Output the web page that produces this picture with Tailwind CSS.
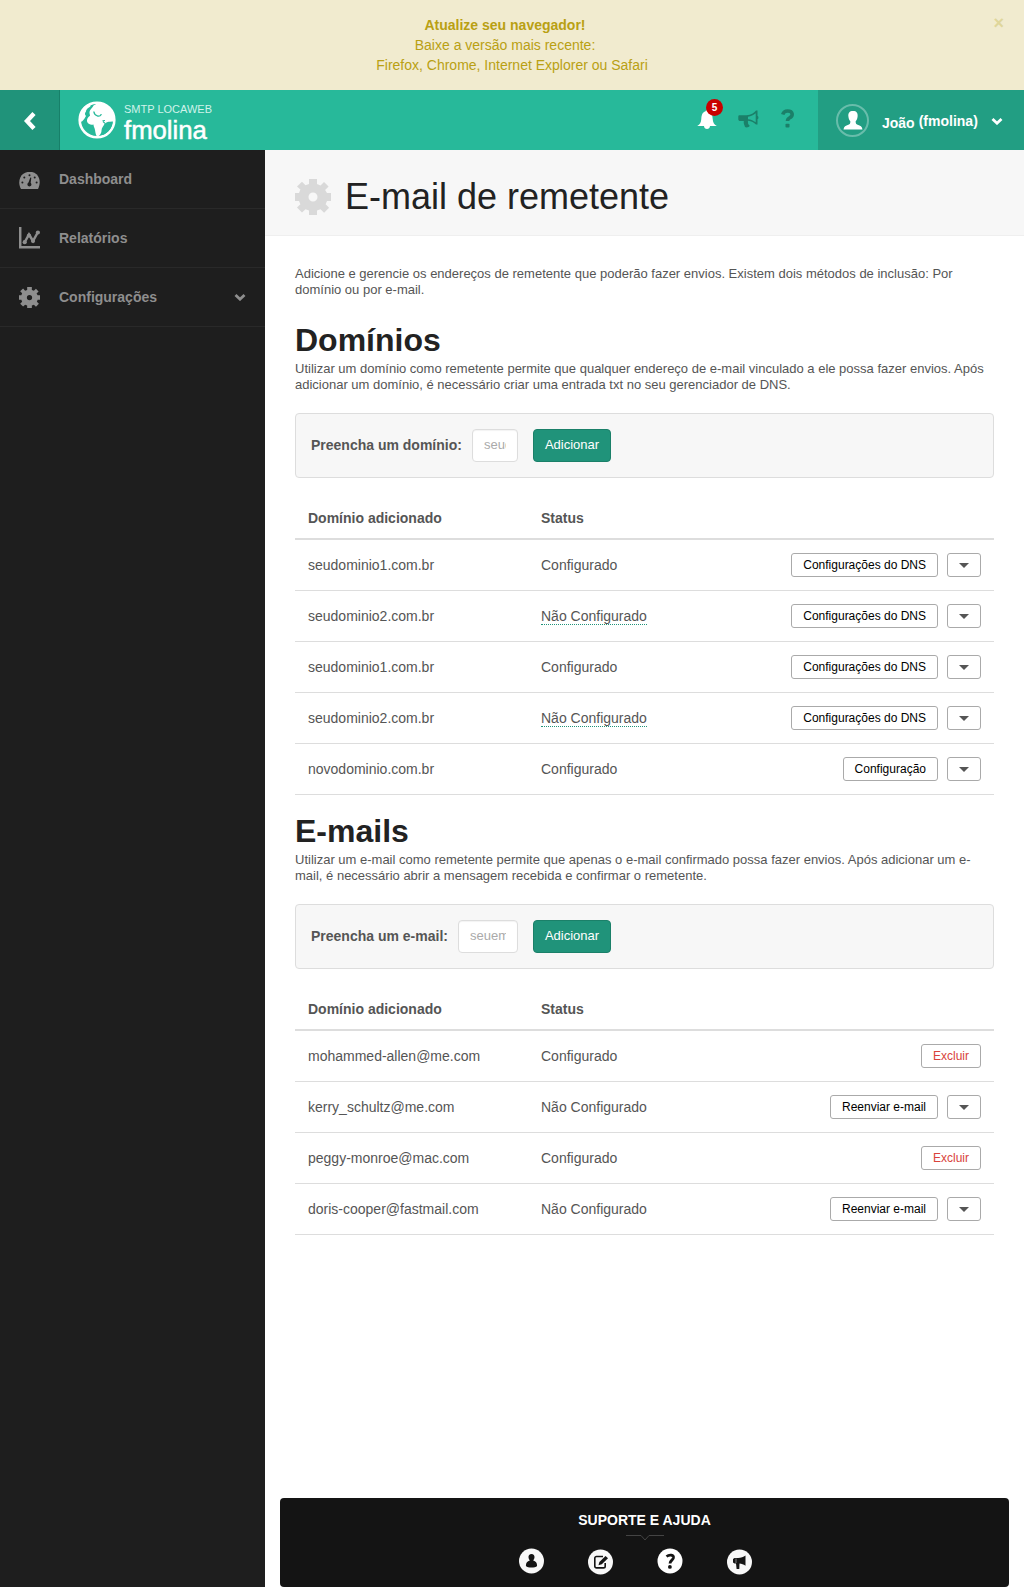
<!DOCTYPE html>
<html lang="pt-BR">
<head>
<meta charset="utf-8">
<title>E-mail de remetente</title>
<script src="https://cdn.jsdelivr.net/npm/@tailwindcss/browser@4"></script>
</head>
<body class="flex h-[1587px] w-[1024px] flex-col overflow-hidden bg-white font-['Liberation_Sans',Arial,sans-serif] text-sm text-[#555] antialiased">
<svg class="hidden">
  <symbol id="gear" viewBox="0 0 36 36"><path fill-rule="evenodd" d="M14 0h8v5l3.500 1.500 3.500-3.600 4.600 4.700-3.500 3.500L32 14h4v8h-4l-1.400 3.200 3.500 3.500-5 5-3.600-3.400L22 31.500V36h-8v-4.500l-3.500-1.200-3.500 3.300-5-5 3.400-3.400L4 22H0v-8h4l1.400-3.500L2 7.400l5-4.700 3.500 3.600L14 5zM18 13.500a4.500 4.500 0 1 0 0 9 4.500 4.500 0 0 0 0-9z"/></symbol>
  <symbol id="horn" viewBox="0 0 21 20"><path fill-rule="evenodd" d="M1.500 6.200h7C13 6 16 4 18 1.500h1.500v5.200c1.300.3 1.300 3.300 0 3.600v5.200H18c-2-2-4.500-3.300-7.800-3.800-.8 1 .2 1.800-.2 2.800.5.800.8 1.500 1.800 2.200-1 2-3.800 2-4.800 1.200-.5-2-1.700-3.500-1.200-6H1.500C.6 11.500.3 11 .3 10.300v-3C.3 6.700.8 6.200 1.500 6.200zM17.700 4.200c-2.200 2-4.700 3.100-7.700 3.500v2.500c3 .3 5.500 1.400 7.700 3.100z"/></symbol>
  <symbol id="chev" viewBox="0 0 12 8"><path d="M1.500 2L6 6.200 10.500 2" fill="none" stroke="currentColor" stroke-width="2.800"/></symbol>
</svg>

<div class="relative h-[90px] bg-[#f1ebcf] pt-[15px] text-center leading-5 text-[#b9a013]">
  <p class="pr-[14px] font-bold">Atualize seu navegador!</p>
  <p class="pr-[14px]">Baixe a versão mais recente:</p>
  <p>Firefox, Chrome, Internet Explorer ou Safari</p>
  <span class="absolute top-[9px] right-5 text-lg font-bold text-[#dfd69b]">×</span>
</div>

<header class="flex h-[60px] bg-[#27b99a] text-white">
  <a class="flex w-[60px] items-center justify-center border-r border-[#178069] bg-[#20937a]">
    <svg class="mt-[2px] h-5 w-3.5" viewBox="0 0 14 20"><path d="M11 2.500L4 10l7 7.500" fill="none" stroke="#fff" stroke-width="4.400"/></svg>
  </a>
  <div class="flex flex-1 pl-[18px]">
    <svg class="mt-[11px] h-[38px] w-[38px]" viewBox="0 0 38 38"><circle cx="19" cy="19" r="17.300" fill="none" stroke="#fff" stroke-width="2.600"/><path fill="#fff" d="M1.500 14.500C3 8 7 4 12 2.500c-.5 1.500 1.500 2 0 3.300-2 1-4 2.700-4.200 5.200-1.300.8-1 3 .2 4-1 1.500-2 3.700-4 5.500l-3 .5z"/><path fill="#fff" d="M20 2c7 0 13 4 15.500 11l1 7-3 .8c-2.500-.3-5.500.2-7 2-.5 2-3 4-3 6.700 0 2.500-1.500 5.500-4.300 6-1.500-1-1.700-4-2.200-6.500-.3-2-1.500-3.500-1.500-5.500-2.500.8-5-.2-6.300-2.500-.8-2.500.5-5 2.800-6.300C12 13 10.800 11.500 12 9.500c.8-2 3-3 3.500-5z"/><path d="M15.800 10.500c.3 2.500 1.600 3.800 3.700 4.500 2.200.5 3.500-.5 3.700-2" fill="none" stroke="#27b99a" stroke-width="1.300"/><path d="M25 20.500l2 1.800M24.500 19.700l2.500-.2" stroke="#27b99a" stroke-width="1.100"/><path fill="#27b99a" d="M33 20.500l1.500 1c-.8 5.500-4 9.800-8.800 12.200l-2.200.2c1.800-1.400 2-4 2.200-5.900 2.500-1.700 5.200-3.500 7.300-7.500z"/></svg>
    <div class="ml-2 pt-[13px]">
      <div class="text-[11px] leading-3 text-[#d0f3ea]">SMTP LOCAWEB</div>
      <div class="pt-px text-[25.700px] leading-[28px] [-webkit-text-stroke:0.5px_#fff]">fmolina</div>
    </div>
  </div>
  <div class="flex w-[121px] items-start text-[#1b8069]">
    <div class="relative">
      <svg class="mt-5 h-[20px] w-[20px]" viewBox="0 0 20 20"><path fill="#fff" d="M8.600 1.200C8.600-.2 11.400-.2 11.400 1.200 15 2.500 15.500 5.500 15.700 9c.2 3.500 1.300 5.500 4.100 7H13c0 4-6 4-6 0H.2C3 14.500 4.100 12.500 4.300 9c.2-3.500.7-6.500 4.300-7.800z"/></svg>
      <span class="absolute -right-[6px] top-[9px] flex h-[17px] w-[17px] items-center justify-center rounded-full bg-[#c90000] pt-px text-[10px] font-bold text-white">5</span>
    </div>
    <svg class="ml-[21px] mt-[19px] h-5 w-[21px] fill-current"><use href="#horn"/></svg>
    <svg class="ml-[22px] mt-[19px] h-[19px] w-[13px]" viewBox="0 0 13 19"><path d="M1.700 5.500C2.500 3 4 2 6.500 2c6 0 5.500 5.200 2.300 6.700-1.800 1-2.300 1.800-2.300 3.300" fill="none" stroke="currentColor" stroke-width="3.600"/><rect x="4.500" y="14.800" width="4" height="3.800" rx=".8" fill="currentColor"/></svg>
  </div>
  <div class="flex w-[206px] bg-[#229e83] pl-[18px]">
    <div class="mt-[14px] flex h-[33px] w-[33px] items-center justify-center rounded-full border-2 border-[#68bdab]">
      <svg class="h-[19px] w-[20px] shrink-0" viewBox="0 0 20 19"><path fill="#fff" d="M10 0c3.500 0 5 2 4.600 5.500-.3 2.500-1 3.800-2 5 .2 2 .4 2.700 2 3.200 2.800.8 4.400 1.700 4.900 4.800H.5c.5-3.100 2.100-4 4.900-4.800 1.600-.5 1.800-1.200 2-3.200-1-1.200-1.700-2.500-2-5C5 2 6.500 0 10 0z"/></svg>
    </div>
    <div class="ml-[13px] flex pt-[21px] text-[14px] leading-5 font-bold"><span class="mt-[2px] mr-1">João</span><span>(fmolina)</span></div>
    <svg class="mt-[27px] ml-[13px] h-2 w-3"><use href="#chev"/></svg>
  </div>
</header>

<div class="flex min-h-0 flex-1">
  <nav class="w-[265px] bg-[#1e1e1e] font-bold text-[#8e8e8e]">
    <a class="flex h-[59px] items-center border-b border-[#292929] pl-[19px]">
      <svg class="mt-[3px] h-[17px] w-[21px]" viewBox="0 0 21 17"><path fill="currentColor" d="M2 17C-1 12 0 5 4 2 8-1 14-1 17.500 2.200 21.500 6 21.500 12 19 17z"/><g fill="#1e1e1e"><circle cx="3.400" cy="10.500" r="1"/><circle cx="5.300" cy="5.500" r="1"/><circle cx="10.500" cy="3.200" r="1"/><circle cx="15.700" cy="5.500" r="1"/><circle cx="17.600" cy="10.500" r="1"/><path d="M11.300 5.500l1 .3-.6 5c1.500 1.700.5 3.700-1.200 3.700-2 0-3-2.500-1-3.900z"/></g></svg>
      <span class="ml-[19px]">Dashboard</span>
    </a>
    <a class="flex h-[59px] items-center border-b border-[#292929] pl-[19px]">
      <svg class="h-[22px] w-[21px]" viewBox="0 0 21 22"><g fill="none" stroke="currentColor"><path d="M1.200 0v20.300H21" stroke-width="2.500"/><path d="M5.500 15.500l4.500-8 4 6.500 5-9" stroke-width="2.500"/></g><g fill="currentColor"><circle cx="5.700" cy="15.200" r="2.100"/><circle cx="10" cy="8.500" r="2.100"/><circle cx="14" cy="14" r="2.100"/><circle cx="18.900" cy="5.500" r="2.100"/></g></svg>
      <span class="ml-[19px]">Relatórios</span>
    </a>
    <a class="flex h-[59px] items-center border-b border-[#292929] pl-[19px]">
      <svg class="h-[21px] w-[21px] fill-current"><use href="#gear"/></svg>
      <span class="ml-[19px] flex-1">Configurações</span>
      <svg class="mr-[19px] h-2 w-3"><use href="#chev"/></svg>
    </a>
  </nav>

  <main class="flex flex-1 flex-col">
    <div class="flex h-[86px] border-b border-[#efefef] bg-[#f7f7f7] pl-[30px]">
      <svg class="mt-[29px] h-[36px] w-[36px] fill-[#d9d9d9]"><use href="#gear"/></svg>
      <h1 class="ml-[14px] mt-[27px] text-[36px] leading-10 text-[#222]">E-mail de remetente</h1>
    </div>
    <div class="w-[729px] pl-[30px] text-[13px] leading-4">
      <p class="pt-[30px]">Adicione e gerencie os endereços de remetente que poderão fazer envios. Existem dois métodos de inclusão: Por<br>domínio ou por e-mail.</p>

      <section class="mt-[22px]">
        <h2 class="h-[41px] text-[32px] leading-[40px] font-bold text-[#222]">Domínios</h2>
        <p>Utilizar um domínio como remetente permite que qualquer endereço de e-mail vinculado a ele possa fazer envios. Após<br>adicionar um domínio, é necessário criar uma entrada txt no seu gerenciador de DNS.</p>
        <form class="mt-5 flex h-[65px] items-center rounded border border-[#ddd] bg-[#f7f7f7] pl-[15px]">
          <label class="w-[161px] pb-0.5 text-sm font-bold">Preencha um domínio:</label>
          <div class="h-[33px] w-[46px] rounded border border-[#ddd] bg-white px-[11px] shadow-[inset_0_1px_1px_#0000000d]"><div class="overflow-hidden leading-[30px] whitespace-nowrap text-[#aaa]">seudominio</div></div>
          <button class="ml-[15px] h-[33px] w-[78px] rounded border border-[#1b8069] bg-[#20937a] pb-px text-white">Adicionar</button>
        </form>
        <div class="mt-5 text-sm" id="domains"></div>
      </section>

      <section class="mt-4">
        <h2 class="h-[41px] text-[32px] leading-[40px] font-bold text-[#222]">E-mails</h2>
        <p>Utilizar um e-mail como remetente permite que apenas o e-mail confirmado possa fazer envios. Após adicionar um e-<br>mail, é necessário abrir a mensagem recebida e confirmar o remetente.</p>
        <form class="mt-5 flex h-[65px] items-center rounded border border-[#ddd] bg-[#f7f7f7] pl-[15px]">
          <label class="w-[147px] pb-0.5 text-sm font-bold">Preencha um e-mail:</label>
          <div class="h-[33px] w-[60px] rounded border border-[#ddd] bg-white px-[11px] shadow-[inset_0_1px_1px_#0000000d]"><div class="overflow-hidden leading-[30px] whitespace-nowrap text-[#aaa]">seuemail</div></div>
          <button class="ml-[15px] h-[33px] w-[78px] rounded border border-[#1b8069] bg-[#20937a] pb-px text-white">Adicionar</button>
        </form>
        <div class="mt-5 text-sm" id="emails"></div>
      </section>
    </div>

    <footer class="mt-auto ml-[15px] h-[89px] w-[729px] rounded bg-[#141414] pt-[13px] text-center text-white">
      <div class="text-sm leading-[18px] font-bold">SUPORTE E AJUDA</div>
      <svg class="mx-auto mt-[6px] h-[6px] w-[38px]" viewBox="0 0 38 6"><path d="M0 .5h15l4 4.500 4-4.500h15" fill="none" stroke="#444"/></svg>
      <div class="ml-[239px] mt-[7px] flex gap-[44px]">
        <svg class="h-[26px] w-[25px]" viewBox="0 0 25 26"><circle cx="12.500" cy="13" r="12.500" fill="#f8f8f8"/><path fill="#141414" d="M12.500 6c2 0 3.200 1.300 3 3.300-.1 1.700-.8 2.400-1.300 3.200 2.500.8 3.900 2 3.900 5.500-2 2-9.200 2-11.200 0 0-3.500 1.400-4.700 3.900-5.500-.5-.8-1.200-1.500-1.300-3.200-.2-2 1-3.300 3-3.300z"/></svg>
        <svg class="mt-px h-[26px] w-[25px]" viewBox="0 0 25 26"><circle cx="12.500" cy="13" r="12.500" fill="#f8f8f8"/><path d="M15 7.500H8.500a1.700 1.700 0 0 0-1.700 1.700v8a1.700 1.700 0 0 0 1.700 1.700h7a1.700 1.700 0 0 0 1.700-1.700V14" fill="none" stroke="#141414" stroke-width="1.600"/><path fill="#141414" d="M17.500 7l2.500 2.300-6.200 6-3.300.9.900-3.200z"/></svg>
        <svg class="h-[26px] w-[26px]" viewBox="0 0 25 26"><circle cx="12.500" cy="13" r="12.500" fill="#fff"/><path d="M9 8.500c3-2.300 7.500-1.800 6.900 1.600-.4 2-3.400 2.500-3.400 5.400" fill="none" stroke="#141414" stroke-width="2.800"/><circle cx="12.400" cy="18.900" r="1.900" fill="#141414"/></svg>
        <svg class="mt-px h-[26px] w-[25px]" viewBox="0 0 25 26"><circle cx="12.500" cy="13" r="12.500" fill="#f8f8f8"/><path fill="#141414" d="M18.500 6.500v10.300c-2-1.300-4-2-6-2.200l-.2 5.400H9.600l-.6-5.500H7.500l-1.500-1V10l1.500-1H11c3 0 5.500-.9 7.500-2.500z"/><path d="M9 9.500v4.500" stroke="#aaa" stroke-width=".7"/></svg>
      </div>
    </footer>
  </main>
</div>

<script>
  const button = (label, color) => `<button class="h-6 rounded-[3px] border border-[#aaa] bg-white px-[11px] pb-px text-xs leading-none ${color}">${label}</button>`;
  const caret = `<button class="flex h-6 w-[34px] items-center justify-center rounded-[3px] border border-[#aaa] bg-white"><svg class="h-[5px] w-[10px]" viewBox="0 0 10 5"><path d="M0 0h10L5 5z" fill="#555"/></svg></button>`;
  const table = (id, rows) => {
    document.getElementById(id).innerHTML =
      `<div class="grid h-[42px] grid-cols-[233px_1fr] items-center border-b-2 border-[#ddd] pl-[13px] font-bold"><span>Domínio adicionado</span><span>Status</span></div>` +
      rows.map(([name, status, action, tip]) =>
        `<div class="grid h-[51px] grid-cols-[233px_1fr_auto] items-center border-b border-[#ddd] px-[13px]"><span>${name}</span><span><span class="${tip ? 'border-b border-dotted border-[#20937a]' : ''}">${status}</span></span><div class="flex gap-[9px]">${action === 'Excluir' ? button(action, 'text-[#d9433c]') : button(action, 'text-black') + caret}</div></div>`).join('');
  };
  table('domains', [
    ['seudominio1.com.br', 'Configurado', 'Configurações do DNS'],
    ['seudominio2.com.br', 'Não Configurado', 'Configurações do DNS', true],
    ['seudominio1.com.br', 'Configurado', 'Configurações do DNS'],
    ['seudominio2.com.br', 'Não Configurado', 'Configurações do DNS', true],
    ['novodominio.com.br', 'Configurado', 'Configuração'],
  ]);
  table('emails', [
    ['mohammed-allen@me.com', 'Configurado', 'Excluir'],
    ['kerry_schultz@me.com', 'Não Configurado', 'Reenviar e-mail'],
    ['peggy-monroe@mac.com', 'Configurado', 'Excluir'],
    ['doris-cooper@fastmail.com', 'Não Configurado', 'Reenviar e-mail'],
  ]);
</script>
</body>
</html>
